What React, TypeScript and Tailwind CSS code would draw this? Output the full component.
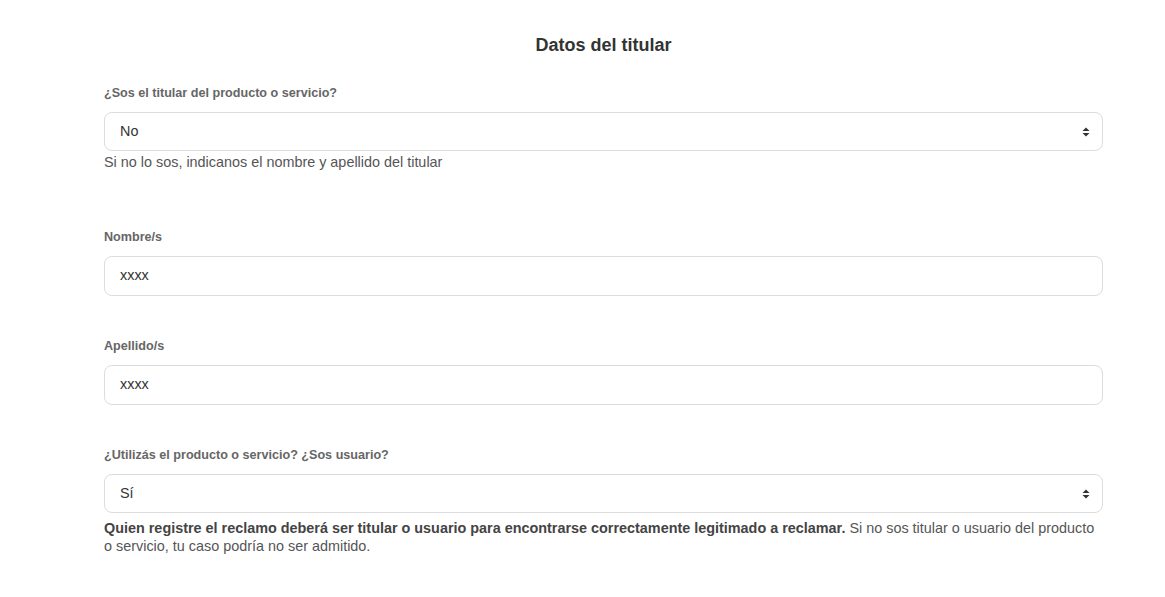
import React from "react";

function SortArrows() {
  return (
    <svg width="8" height="10" viewBox="0 0 8 10" className="absolute right-[12px] top-1/2 -translate-y-1/2" aria-hidden>
      <path d="M0.5 4 L4 0.5 L7.5 4 Z" fill="#333" />
      <path d="M0.5 6 L4 9.5 L7.5 6 Z" fill="#333" />
    </svg>
  );
}

function Label({ children }: { children: React.ReactNode }) {
  return <label className="block text-[12.6px] leading-4 font-bold text-[#666] mb-[11px] pt-[2px]">{children}</label>;
}

function SelectBox({ value }: { value: string }) {
  return (
    <div className="relative h-[39px] rounded-[8px] border border-[#dcdcdc] bg-white flex items-center pl-[15px] text-[14.4px] text-[#333]">
      {value}
      <SortArrows />
    </div>
  );
}

function InputBox({ value }: { value: string }) {
  return (
    <div className="h-[40px] rounded-[8px] border border-[#dcdcdc] bg-white flex items-center pl-[15px] text-[14.4px] text-[#333]">
      {value}
    </div>
  );
}

export default function App() {
  return (
    <div className="min-h-[597px] bg-white font-['Liberation_Sans',Arial,sans-serif]">
      <div className="ml-[104px] w-[999px] pt-[34px]">
        <h2 className="text-center text-[18px] leading-[22px] font-bold text-[#333] mb-[27px]">Datos del titular</h2>

        <Label>¿Sos el titular del producto o servicio?</Label>
        <SelectBox value="No" />
        <p className="mt-[2px] text-[14.4px] leading-[18px] text-[#555] mb-[56px]">
          Si no lo sos, indicanos el nombre y apellido del titular
        </p>

        <div className="mb-[40px]">
          <Label>Nombre/s</Label>
          <InputBox value="xxxx" />
        </div>

        <div className="mb-[40px]">
          <Label>Apellido/s</Label>
          <InputBox value="xxxx" />
        </div>

        <Label>¿Utilizás el producto o servicio? ¿Sos usuario?</Label>
        <SelectBox value="Sí" />
        <p className="mt-[6px] text-[14.4px] leading-[18px] text-[#555]">
          <strong className="font-bold text-[#444]">
            Quien registre el reclamo deberá ser titular o usuario para encontrarse correctamente legitimado a reclamar.
          </strong>{" "}
          Si no sos titular o usuario del producto o servicio, tu caso podría no ser admitido.
        </p>
      </div>
    </div>
  );
}
